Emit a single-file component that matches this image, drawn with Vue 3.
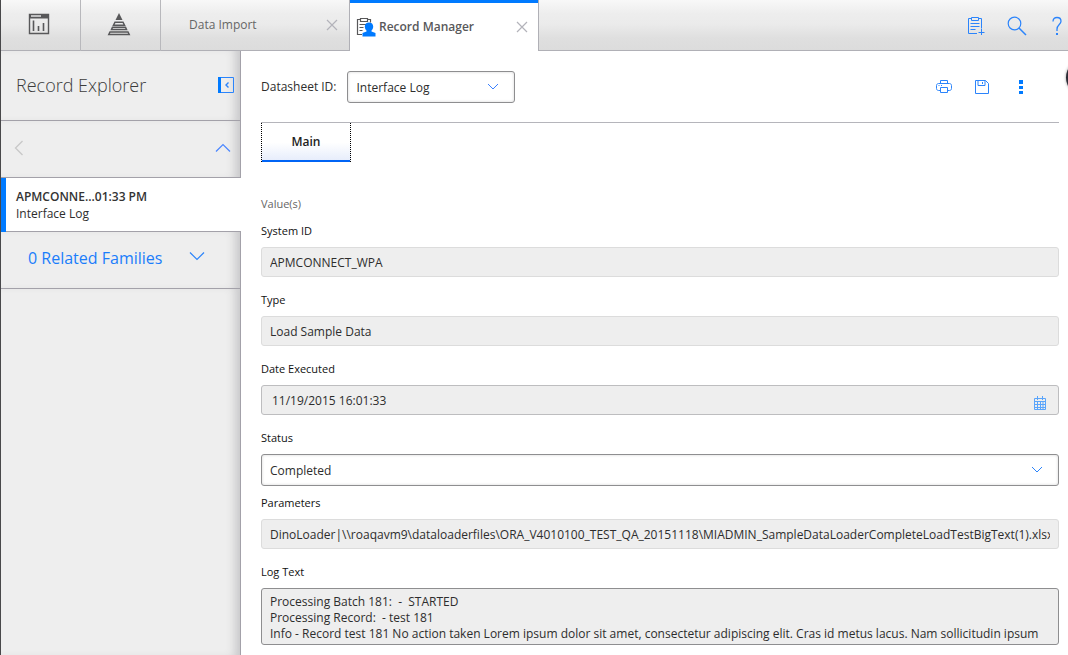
<script setup>
import { ref } from 'vue'

const datasheet = ref('Interface Log')
const status = ref('Completed')
const systemId = ref('APMCONNECT_WPA')
const recordType = ref('Load Sample Data')
const dateExecuted = ref('11/19/2015 16:01:33')
const parameters = ref(
  'DinoLoader|\\\\roaqavm9\\dataloaderfiles\\ORA_V4010100_TEST_QA_20151118\\MIADMIN_SampleDataLoaderCompleteLoadTestBigText(1).xlsx'
)
const logText = ref(
  'Processing Batch 181:  -  STARTED\nProcessing Record:  - test 181\nInfo - Record test 181 No action taken Lorem ipsum dolor sit amet, consectetur adipiscing elit. Cras id metus lacus. Nam sollicitudin ipsum'
)
</script>

<template>
  <div class="app">
    <header class="topbar">
      <button class="nav-btn" aria-label="Dashboard">
        <svg width="22" height="22" viewBox="0 0 22 22" fill="none" stroke="#58585a">
          <path d="M1.500 1.500h19v19h-19z" stroke-width="1.400" />
          <path d="M1 1h20v4.500h-20z" fill="#58585a" stroke="none" />
          <path d="M3 3h10" stroke="#eee" stroke-width="1.400" />
          <path d="M5.500 7.500v10.500M10.500 13v5M15.500 10v8" stroke-width="1.600" />
        </svg>
      </button>
      <button class="nav-btn" aria-label="Hierarchy">
        <svg width="24" height="24" viewBox="0 0 24 24" fill="none" stroke="#58585a" stroke-width="1.500">
          <path d="M12 1l3.500 7h-7z" fill="#58585a" stroke="none" />
          <path d="M8 10.200h8l1.500 3h-11zM5.500 15.200h13l1 2.300h-15zM3 20h18l1.200 2.500H1.800z" />
        </svg>
      </button>
      <div class="tab">
        <a class="tab-name" href="#">Data Import</a>
        <button class="close" aria-label="Close Data Import">
          <svg width="12" height="12" viewBox="0 0 12 12"><path d="M1 1l10 10M11 1L1 11" stroke="#b3b3ba" stroke-width="1.200" /></svg>
        </button>
      </div>
      <div class="tab active">
        <svg class="tab-icon" width="20" height="20" viewBox="0 0 20 20" fill="none">
          <path d="M4 2.500H1.500v15H6M12 2.500h2.500v3M4.500 1.500h7v3h-7z" stroke="#58585a" stroke-width="1.200" />
          <path d="M3.500 7.500h7M3.500 10.500h4M3.500 13.500h3" stroke="#58585a" />
          <path d="M13 5.500c2.600 0 4.200 1.600 4.200 4.100 0 1.800-.6 3-1.700 4v1l4 1.500V19.500H6.500v-3.400l4-1.500v-1c-1.100-1-1.700-2.200-1.700-4 0-2.500 1.600-4.100 4.200-4.100z" fill="#007aff" />
        </svg>
        <a class="tab-name" href="#">Record Manager</a>
        <button class="close" aria-label="Close Record Manager">
          <svg width="12" height="12" viewBox="0 0 12 12"><path d="M1 1l10 10M11 1L1 11" stroke="#b3b3ba" stroke-width="1.200" /></svg>
        </button>
      </div>
      <div class="actions">
        <button class="icon-btn" aria-label="New record">
          <svg width="20" height="20" viewBox="0 0 20 20" fill="none" stroke="#2b84fb">
            <path d="M4 2.500H1.500v15H10M12 2.500h2.500v10M4.500 1.500h7v3h-7z" />
            <path d="M3.500 7.500h9M3.500 10.500h9M3.500 13.500h5M14.500 13v6M11.500 16.500h6" />
          </svg>
        </button>
        <button class="icon-btn" aria-label="Search">
          <svg width="20" height="20" viewBox="0 0 20 20" fill="none" stroke="#2b84fb" stroke-width="1.200">
            <circle cx="7.500" cy="7.500" r="6.300" /><path d="M12 12l7 7" stroke-width="1.500" />
          </svg>
        </button>
        <button class="icon-btn" aria-label="Help">
          <svg width="20" height="20" viewBox="-5 0 20 20" fill="none" stroke="#2b84fb" stroke-width="1.300">
            <path d="M1 5.500C1 2.800 2.500 1.500 5 1.500s4 1.500 4 3.700c0 3.300-4 3.500-4 8V15" />
            <path d="M4 17h2v2H4z" fill="#2b84fb" stroke="none" />
          </svg>
        </button>
      </div>
    </header>

    <div class="body">
      <aside class="sidebar">
        <div class="panel explorer">
          <h1>Record Explorer</h1>
          <button class="icon-btn" aria-label="Collapse panel">
            <svg width="16" height="16" viewBox="0 0 16 16" fill="none" stroke="#2b84fb">
              <path d="M.5.5h15v15H.5z" /><path d="M0 0h3v16H0z" fill="#007aff" stroke="none" />
              <path d="M10.500 5.500L8 8l2.500 2.500" stroke-width="1.400" />
            </svg>
          </button>
        </div>
        <div class="panel pager">
          <button class="icon-btn" aria-label="Back">
            <svg width="10" height="16" viewBox="0 0 10 16"><path d="M8.500 1L1.500 8l7 7" fill="none" stroke="#c8c8c8" stroke-width="1.300" /></svg>
          </button>
          <button class="icon-btn" aria-label="Collapse list">
            <svg width="16" height="10" viewBox="0 0 16 10"><path d="M1 8.500l7-7 7 7" fill="none" stroke="#4a86ff" stroke-width="1.200" /></svg>
          </button>
        </div>
        <a class="record" href="#">
          <strong>APMCONNE...01:33 PM</strong>
          <span>Interface Log</span>
        </a>
        <button class="panel related">
          <span>0 Related Families</span>
          <svg width="16" height="14" viewBox="0 0 16 14"><path d="M1 1.500l7 7 7-7" fill="none" stroke="#2b84fb" stroke-width="1.200" /></svg>
        </button>
        <div class="panel rest"></div>
      </aside>

      <main class="main">
        <div class="toolbar">
          <label for="datasheet">Datasheet ID:</label>
          <div class="select datasheet">
            <select id="datasheet" v-model="datasheet"><option>Interface Log</option></select>
            <svg class="chevron" width="12" height="8" viewBox="0 0 12 8"><path d="M1 1l5 5 5-5" fill="none" stroke="#3a80ff" /></svg>
          </div>
          <div class="tools">
            <button class="icon-btn" aria-label="Print">
              <svg width="16" height="16" viewBox="0 0 16 16" fill="none" stroke="#2b84fb">
                <path d="M4.500 4.500v-3h7v3M4.500 11.500h-2c-1 0-2-.7-2-2v-3c0-1.200 1-2 2-2h11c1 0 2 .8 2 2v3c0 1.300-1 2-2 2h-2M4.500 8.500h7v5h-7z" />
                <path d="M2.500 6.500h1M5 6.500h1" />
              </svg>
            </button>
            <button class="icon-btn" aria-label="Save">
              <svg width="16" height="16" viewBox="0 0 16 16" fill="none" stroke="#2b84fb">
                <path d="M1.500 1.500h10l3 3v10h-13zM4 1.500v5h7v-5M8.500 3v2" />
              </svg>
            </button>
            <button class="icon-btn" aria-label="More">
              <svg width="16" height="16" viewBox="0 0 16 16" fill="#007aff"><path d="M7 1h4v4H7zM7 7h4v3H7zM7 12h4v3H7z" /></svg>
            </button>
          </div>
        </div>
        <nav class="tabs"><button class="main-tab">Main</button></nav>

        <form class="form" @submit.prevent>
          <p class="caption">Value(s)</p>
          <div class="field">
            <label for="system-id">System ID</label>
            <input id="system-id" class="box" v-model="systemId" readonly />
          </div>
          <div class="field">
            <label for="type">Type</label>
            <input id="type" class="box" v-model="recordType" readonly />
          </div>
          <div class="field">
            <label for="date">Date Executed</label>
            <div class="date">
              <input id="date" class="box" v-model="dateExecuted" readonly />
              <svg class="calendar" width="12" height="14" viewBox="0 0 12 14" fill="none" stroke="#5aa5fb">
                <path d="M.5 2.500h11v11H.5zM.5 5.500h11M.5 8.500h11M.5 11.500h11M3.500 5.500v8M6.500 5.500v8M9 5.500v8M3.500 0v4M8.500 0v4" />
              </svg>
            </div>
          </div>
          <div class="field status">
            <label for="status">Status</label>
            <div class="select">
              <select id="status" v-model="status"><option>Completed</option></select>
              <svg class="chevron" width="12" height="8" viewBox="0 0 12 8"><path d="M1 1l5 5 5-5" fill="none" stroke="#2b84fb" /></svg>
            </div>
          </div>
          <div class="field">
            <label for="params">Parameters</label>
            <input id="params" class="box" v-model="parameters" readonly />
          </div>
          <div class="field">
            <label for="log">Log Text</label>
            <textarea id="log" rows="3" v-model="logText" readonly></textarea>
          </div>
        </form>
        <div class="badge"></div>
      </main>
    </div>
  </div>
</template>

<style>
body {
  background: #fff;
  overflow: hidden;
}
</style>

<style scoped>
.app {
  display: flex;
  flex-direction: column;
  height: 100vh;
  box-sizing: border-box;
  border-left: 1px solid #48484a;
  overflow: hidden;
  font: 12px/16px "Open Sans", "Noto Sans", sans-serif;
  color: #2d2d2d;
}
.app *, .app *::before { box-sizing: border-box; }
button, input, select, textarea {
  font: inherit;
  color: inherit;
  margin: 0;
}
button {
  background: none;
  border: 0;
  padding: 0;
}
a { color: inherit; text-decoration: none; }
svg { display: block; flex: none; }

.topbar {
  display: flex;
  flex: none;
  height: 51px;
  background: linear-gradient(#f8f8f8 0, #ededed 14px, #ebebeb 24px, #dfdfdf 38px, #dcdcdc 50px);
  box-shadow: inset 0 -1px #b0b0b6;
}
.nav-btn {
  display: flex;
  justify-content: center;
  align-items: center;
  width: 80px;
  padding-bottom: 3px;
  padding-right: 4px;
  border-right: 1px solid #b8b8bc;
}
.tab {
  display: flex;
  align-items: center;
  width: 188px;
  padding: 0 11px 2px 28px;
  color: #666;
}
.tab-name { flex: 1; }
.tab.active {
  width: 190px;
  padding: 3px 10px 0 6px;
  background: #fff;
  border: solid #b0b0b6;
  border-width: 0 1px;
  box-shadow: inset 0 3px #007aff;
  color: #58585a;
  font-weight: 600;
}
.tab-icon { margin-right: 3px; }
.actions {
  display: flex;
  align-items: center;
  gap: 20px;
  margin-left: auto;
  padding-right: 1px;
}

.body { display: flex; flex: 1; min-height: 0; }
.sidebar {
  display: flex;
  flex-direction: column;
  flex: none;
  width: 240px;
}
.panel {
  display: flex;
  align-items: center;
  background: #eee;
  border: solid #a3a1a9;
  border-width: 0 1px 1px 0;
  box-shadow: inset -10px 0 10px -5px #c8c8ca;
}
.explorer {
  height: 70px;
  justify-content: space-between;
  padding: 0 6px 1px 15px;
}
h1 {
  margin: 0;
  font-size: 18px;
  line-height: 24px;
  font-weight: 300;
  color: #3c3c3c;
}
.pager {
  height: 57px;
  justify-content: space-between;
  padding: 0 9px 2px 13px;
}
.record {
  display: flex;
  flex-direction: column;
  justify-content: center;
  height: 54px;
  padding-left: 10px;
  line-height: 17px;
  border-left: 5px solid #007aff;
  box-shadow: inset 0 -1px #a3a1a9;
  background: #fff;
}
.record strong { font-weight: 600; color: #333; }
.related {
  height: 57px;
  gap: 27px;
  padding: 0 0 4px 27px;
  color: #1a7dfb;
  font-size: 16px;
}
.rest { flex: 1; border-bottom: 0; }

.main {
  position: relative;
  flex: 1;
  min-width: 0;
  padding: 0 9px 0 20px;
}
.toolbar {
  display: flex;
  align-items: center;
  gap: 11px;
  height: 72px;
  padding-top: 1px;
  border-bottom: 1px solid #b5b5bb;
}
.select { position: relative; }
.select select {
  display: block;
  width: 100%;
  height: 32px;
  padding: 1px 8px 0;
  appearance: none;
  background: #fff;
  border: 1px solid #8e8e90;
  border-radius: 3px;
  box-shadow: inset 0 0 3px #d5d5d5;
}
.datasheet { width: 168px; }
.chevron { position: absolute; right: 16px; top: 12px; pointer-events: none; }
.tools { display: flex; align-items: center; gap: 22px; margin-left: auto; padding-right: 31px; }
.tabs { display: flex; }
.main-tab {
  width: 90px;
  height: 39px;
  padding-bottom: 2px;
  background: linear-gradient(#fff 50%, #e4ebfb);
  border: 1px dotted #000;
  border-width: 0 1px;
  box-shadow: inset 0 -2px #0064f5;
  font-weight: 600;
  color: #222;
}

.form { display: flex; flex-direction: column; padding-top: 34px; }
.caption {
  margin: 0 0 11px;
  font-size: 11px;
  color: #666;
}
.field {
  display: flex;
  flex-direction: column;
  gap: 8px;
  margin-bottom: 15px;
}
.field.status { margin-bottom: 9px; }
.field label { font-size: 11px; color: #111; }
.box {
  display: block;
  width: 100%;
  height: 30px;
  padding: 0 8px;
  background: #eee;
  border: 1px solid #dcdcdc;
  border-radius: 3px;
}
.date { position: relative; }
.date .box { padding-left: 10px; border-color: #bdbdbf; }
.calendar { position: absolute; right: 13px; top: 11px; }
textarea {
  display: block;
  width: 100%;
  height: 57px;
  padding: 5px 8px 2px;
  background: #eee;
  border: 1px solid #8e8e90;
  border-radius: 3px;
  resize: none;
  overflow: hidden;
}
.badge {
  position: absolute;
  top: 9px;
  right: -33px;
  width: 35px;
  height: 35px;
  border-radius: 50%;
  background: #2b2b35;
  box-shadow: 0 0 3px #999;
}
</style>
